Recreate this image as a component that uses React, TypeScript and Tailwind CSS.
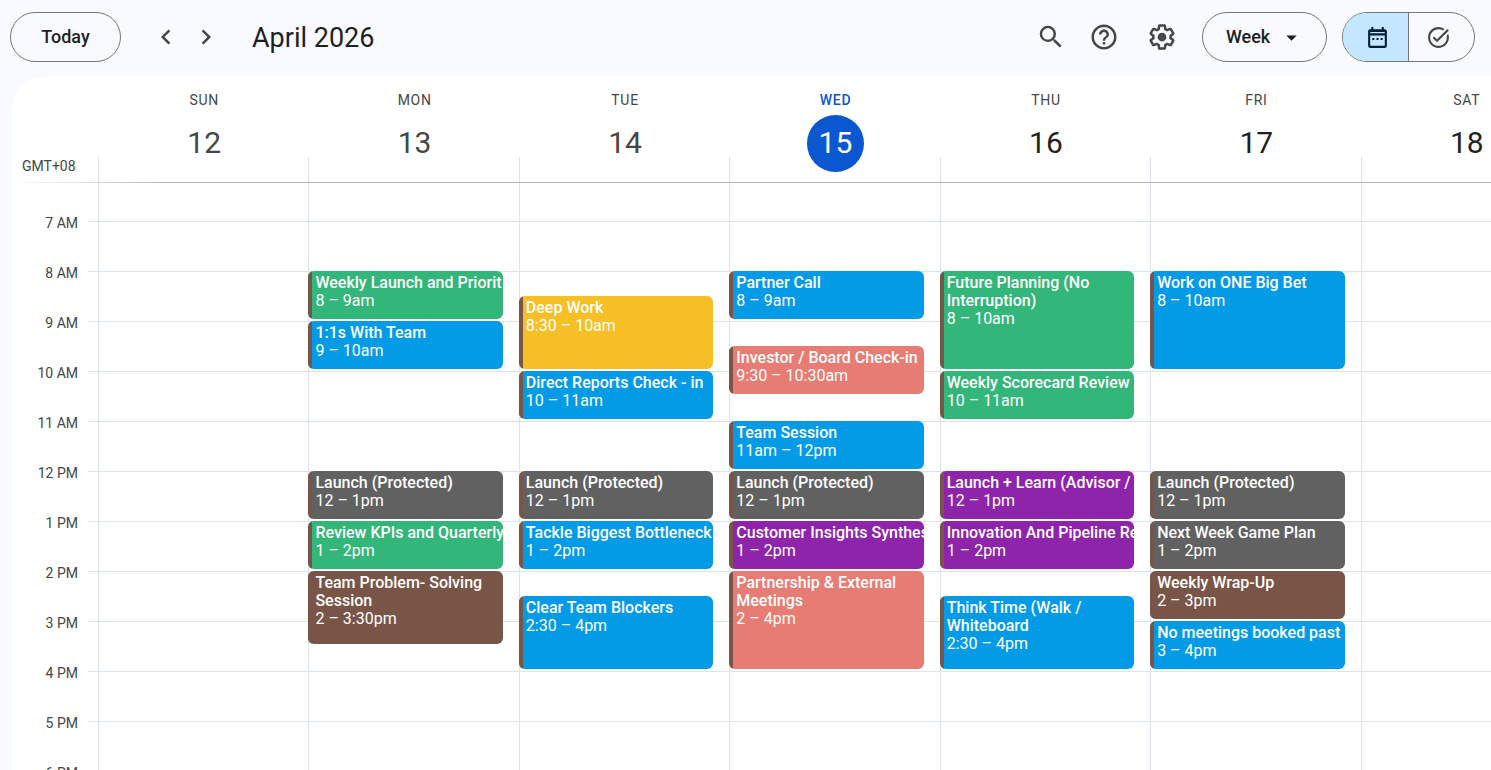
import { Fragment } from 'react';
import { MdArrowDropDown, MdChevronLeft, MdChevronRight, MdHelpOutline, MdSearch, MdTaskAlt } from 'react-icons/md';

const FIRST_HOUR = 6;
const HOURS = [7, 8, 9, 10, 11, 12, 13, 14, 15, 16, 17, 18];

const days = [
    { name: 'SUN', date: 12, past: true },
    { name: 'MON', date: 13, past: true },
    { name: 'TUE', date: 14, past: true },
    { name: 'WED', date: 15, today: true },
    { name: 'THU', date: 16 },
    { name: 'FRI', date: 17 },
    { name: 'SAT', date: 18 },
];

const colors = {
    green: 'bg-[#33b679]',
    blue: 'bg-[#039be5]',
    yellow: 'bg-[#f6bf26]',
    pink: 'bg-[#e67c73]',
    gray: 'bg-[#616161]',
    purple: 'bg-[#8e24aa]',
    brown: 'bg-[#795548]',
};

type CalendarEvent = {
    day: number;
    start: number;
    end: number;
    title: string;
    time: string;
    color: keyof typeof colors;
};

const events: CalendarEvent[] = [
    { day: 1, start: 8, end: 9, title: 'Weekly Launch and Priorit', time: '8 – 9am', color: 'green' },
    { day: 1, start: 9, end: 10, title: '1:1s With Team', time: '9 – 10am', color: 'blue' },
    { day: 1, start: 12, end: 13, title: 'Launch (Protected)', time: '12 – 1pm', color: 'gray' },
    { day: 1, start: 13, end: 14, title: 'Review KPIs and Quarterly', time: '1 – 2pm', color: 'green' },
    { day: 1, start: 14, end: 15.5, title: 'Team Problem- Solving Session', time: '2 – 3:30pm', color: 'brown' },
    { day: 2, start: 8.5, end: 10, title: 'Deep Work', time: '8:30 – 10am', color: 'yellow' },
    { day: 2, start: 10, end: 11, title: 'Direct Reports Check - in', time: '10 – 11am', color: 'blue' },
    { day: 2, start: 12, end: 13, title: 'Launch (Protected)', time: '12 – 1pm', color: 'gray' },
    { day: 2, start: 13, end: 14, title: 'Tackle Biggest Bottleneck', time: '1 – 2pm', color: 'blue' },
    { day: 2, start: 14.5, end: 16, title: 'Clear Team Blockers', time: '2:30 – 4pm', color: 'blue' },
    { day: 3, start: 8, end: 9, title: 'Partner Call', time: '8 – 9am', color: 'blue' },
    { day: 3, start: 9.5, end: 10.5, title: 'Investor / Board Check-in', time: '9:30 – 10:30am', color: 'pink' },
    { day: 3, start: 11, end: 12, title: 'Team Session', time: '11am – 12pm', color: 'blue' },
    { day: 3, start: 12, end: 13, title: 'Launch (Protected)', time: '12 – 1pm', color: 'gray' },
    { day: 3, start: 13, end: 14, title: 'Customer Insights Synthes', time: '1 – 2pm', color: 'purple' },
    { day: 3, start: 14, end: 16, title: 'Partnership & External Meetings', time: '2 – 4pm', color: 'pink' },
    { day: 4, start: 8, end: 10, title: 'Future Planning (No Interruption)', time: '8 – 10am', color: 'green' },
    { day: 4, start: 10, end: 11, title: 'Weekly Scorecard Review', time: '10 – 11am', color: 'green' },
    { day: 4, start: 12, end: 13, title: 'Launch + Learn (Advisor /', time: '12 – 1pm', color: 'purple' },
    { day: 4, start: 13, end: 14, title: 'Innovation And Pipeline Re', time: '1 – 2pm', color: 'purple' },
    { day: 4, start: 14.5, end: 16, title: 'Think Time (Walk / Whiteboard', time: '2:30 – 4pm', color: 'blue' },
    { day: 5, start: 8, end: 10, title: 'Work on ONE Big Bet', time: '8 – 10am', color: 'blue' },
    { day: 5, start: 12, end: 13, title: 'Launch (Protected)', time: '12 – 1pm', color: 'gray' },
    { day: 5, start: 13, end: 14, title: 'Next Week Game Plan', time: '1 – 2pm', color: 'gray' },
    { day: 5, start: 14, end: 15, title: 'Weekly Wrap-Up', time: '2 – 3pm', color: 'brown' },
    { day: 5, start: 15, end: 16, title: 'No meetings booked past', time: '3 – 4pm', color: 'blue' },
];

// Grid rows are half an hour each, counted from FIRST_HOUR
const rowOf = (hour: number) => (hour - FIRST_HOUR) * 2 + 1;

const hourLabel = (hour: number) => (hour < 12 ? `${hour} AM` : `${hour === 12 ? 12 : hour - 12} PM`);

function SettingsIcon() {
    return (
        <svg viewBox="0 0 24 24" className="w-[30px] h-[30px]" fill="currentColor">
            <path d="M13.85 22.25h-3.7c-.74 0-1.36-.54-1.45-1.27l-.27-1.89c-.27-.14-.53-.29-.79-.46l-1.8.72c-.7.26-1.47-.03-1.81-.65L2.2 15.53c-.35-.66-.2-1.44.36-1.88l1.53-1.19c-.01-.15-.02-.3-.02-.46 0-.15.01-.31.02-.46l-1.52-1.19c-.59-.45-.74-1.26-.37-1.88l1.85-3.19c.34-.62 1.11-.9 1.79-.63l1.81.73c.26-.17.52-.32.78-.46l.27-1.91c.09-.7.71-1.25 1.44-1.25h3.7c.74 0 1.36.54 1.45 1.27l.27 1.89c.27.14.53.29.79.46l1.8-.72c.71-.26 1.48.03 1.82.65l1.84 3.18c.36.66.2 1.44-.36 1.88l-1.52 1.19c.01.15.02.3.02.46s-.01.31-.02.46l1.52 1.19c.56.45.72 1.23.37 1.86l-1.86 3.22c-.34.62-1.11.9-1.8.63l-1.8-.72c-.26.17-.52.32-.78.46l-.27 1.91c-.1.68-.72 1.22-1.46 1.22zm-3.23-2h2.76l.37-2.55.53-.22c.44-.18.88-.44 1.34-.78l.45-.34 2.38.96 1.38-2.4-2.03-1.58.07-.56c.03-.26.06-.51.06-.78s-.03-.53-.06-.78l-.07-.56 2.03-1.58-1.39-2.4-2.39.96-.45-.35c-.42-.32-.87-.58-1.33-.77l-.52-.22-.37-2.55h-2.76l-.37 2.55-.53.21c-.44.19-.88.44-1.34.79l-.45.33-2.38-.95-1.39 2.39 2.03 1.58-.07.56a7 7 0 0 0-.06.79c0 .26.02.53.06.78l.07.56-2.03 1.58 1.38 2.4 2.39-.96.45.35c.43.33.86.58 1.33.77l.53.22.38 2.55z" />
            <circle cx="12" cy="12" r="3.5" />
        </svg>
    );
}

function CalendarIcon() {
    return (
        <svg viewBox="0 0 24 24" className="w-[25px] h-[25px]" fill="currentColor">
            <path d="M19 4h-1V2h-2v2H8V2H6v2H5c-1.1 0-2 .9-2 2v14c0 1.1.9 2 2 2h14c1.1 0 2-.9 2-2V6c0-1.1-.9-2-2-2zm0 16H5V10h14v10zM5 8V6.800h14V8H5zm2 4.500h2v1.800H7zm4 0h2v1.800h-2zm4 0h2v1.800h-2z" />
        </svg>
    );
}

function TopBar() {
    return (
        <header className="flex items-center h-[77px] pl-[10px] pr-4 pb-[3px] text-[#1f1f1f]">
            <button className="h-[50px] w-[111px] rounded-full border border-[#747775] text-lg font-medium">Today</button>
            <div className="flex ml-[25px] text-[#444746]">
                <button aria-label="Previous week" className="w-10 h-10 flex items-center justify-center"><MdChevronLeft size={30} /></button>
                <button aria-label="Next week" className="w-10 h-10 flex items-center justify-center"><MdChevronRight size={30} /></button>
            </div>
            <h1 className="ml-[26px] pt-0.5 text-[27px]">April 2026</h1>
            <div className="flex gap-2 ml-auto mr-[15px] text-[#444746]">
                <button aria-label="Search" className="w-10 h-[50px] flex items-center justify-center"><MdSearch size={30} /></button>
                <button aria-label="Support" className="w-[50px] h-[50px] flex items-center justify-center"><MdHelpOutline size={30} /></button>
                <button aria-label="Settings" className="w-[50px] h-[50px] flex items-center justify-center"><SettingsIcon /></button>
            </div>
            <button className="h-[50px] w-[125px] pl-[23px] flex items-center gap-[9px] rounded-full border border-[#747775] text-lg font-medium">
                Week
                <MdArrowDropDown size={25} />
            </button>
            <div className="flex w-[133px] h-[50px] ml-[15px] rounded-full border border-[#747775] overflow-hidden">
                <button aria-label="Calendar" className="w-[66px] shrink-0 flex items-center justify-center pl-1 bg-[#c2e7ff] text-[#001d35] border-r border-[#747775]"><CalendarIcon /></button>
                <button aria-label="Tasks" className="flex-1 flex items-center justify-center pr-1.5 text-[#444746]"><MdTaskAlt size={25} /></button>
            </div>
        </header>
    );
}

function DayHeader() {
    return (
        <div className="grid grid-cols-[86px_repeat(7,minmax(0,1fr))] shrink-0 h-[105px]">
            <div className="flex flex-col justify-end pb-[6px] pl-[10px] text-sm text-[#444746]">GMT+08</div>
            {days.map((day) => (
                <div key={day.name} className="grid grid-rows-[80px_25px]">
                    <div className="flex flex-col items-center pt-[13px] pl-0.5 text-center">
                        <span className={`h-5 text-sm leading-5 tracking-wider ${day.today ? 'text-[#0b57d0] font-medium' : 'text-[#444746]'}`}>{day.name}</span>
                        <a
                            href="#"
                            className={`mt-[5px] pb-0.5 w-[57px] h-[57px] shrink-0 rounded-full flex items-center justify-center text-[30px] ${day.today ? 'bg-[#0b57d0] text-white' : day.past ? 'text-[#444746]' : 'text-[#1f1f1f]'}`}
                        >
                            {day.date}
                        </a>
                    </div>
                    <div className="border-l border-[#dde3ea]" />
                </div>
            ))}
        </div>
    );
}

function EventCard({ event }: { event: CalendarEvent }) {
    const long = event.end - event.start > 1;

    return (
        <button
            className={`z-10 flex mr-4 mb-[2px] rounded-md overflow-hidden text-left text-white text-base leading-[18px] ${colors[event.color]}`}
            style={{ gridColumn: event.day + 3, gridRow: `${rowOf(event.start)} / ${rowOf(event.end)}` }}
        >
            <span className="w-1 shrink-0 self-stretch bg-[#795548]" />
            <span className="flex flex-col self-start min-w-0 pl-[3px] pt-[3px]">
                <span className={long ? 'font-medium' : 'font-medium whitespace-nowrap'}>{event.title}</span>
                <span>{event.time}</span>
            </span>
        </button>
    );
}

function WeekGrid() {
    return (
        <div className="flex-1 min-h-0 overflow-hidden">
            <div className="-mt-3 grid grid-cols-[76px_10px_repeat(7,minmax(0,1fr))] grid-rows-[repeat(26,25px)]">
                {HOURS.map((hour) => (
                    <Fragment key={hour}>
                        <div
                            className="col-start-1 flex items-center justify-end pr-[10px] pt-1 text-sm text-[#444746]"
                            style={{ gridRow: `${rowOf(hour) - 1} / span 2` }}
                        >
                            {hourLabel(hour)}
                        </div>
                        <div className="col-start-2 -col-end-1 border-t border-[#dde3ea]" style={{ gridRow: rowOf(hour) }} />
                    </Fragment>
                ))}
                {days.map((day, i) => (
                    <div key={day.name} className="row-span-full border-l border-[#dde3ea]" style={{ gridColumn: i + 3 }} />
                ))}
                {events.map((event, i) => (
                    <EventCard key={i} event={event} />
                ))}
            </div>
        </div>
    );
}

export default function App() {
    return (
        <div className="h-screen flex flex-col overflow-hidden bg-[#f8faff] font-['Roboto',sans-serif]">
            <TopBar />
            {/* The week runs past the right edge of the window */}
            <main className="flex-1 min-h-0 flex flex-col ml-3 -mr-20 bg-white rounded-tl-[32px] overflow-hidden">
                <DayHeader />
                <div className="shrink-0 h-px bg-linear-to-r from-transparent to-[#b4b6b5] to-10%" />
                <WeekGrid />
            </main>
        </div>
    );
}
